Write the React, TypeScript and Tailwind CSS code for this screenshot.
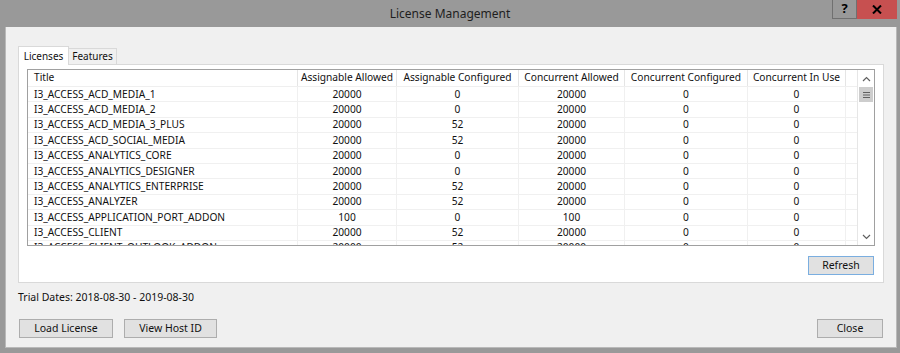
import React from "react";

const rows: string[][] = [
  ["I3_ACCESS_ACD_MEDIA_1", "20000", "0", "20000", "0", "0"],
  ["I3_ACCESS_ACD_MEDIA_2", "20000", "0", "20000", "0", "0"],
  ["I3_ACCESS_ACD_MEDIA_3_PLUS", "20000", "52", "20000", "0", "0"],
  ["I3_ACCESS_ACD_SOCIAL_MEDIA", "20000", "52", "20000", "0", "0"],
  ["I3_ACCESS_ANALYTICS_CORE", "20000", "0", "20000", "0", "0"],
  ["I3_ACCESS_ANALYTICS_DESIGNER", "20000", "0", "20000", "0", "0"],
  ["I3_ACCESS_ANALYTICS_ENTERPRISE", "20000", "52", "20000", "0", "0"],
  ["I3_ACCESS_ANALYZER", "20000", "52", "20000", "0", "0"],
  ["I3_ACCESS_APPLICATION_PORT_ADDON", "100", "0", "100", "0", "0"],
  ["I3_ACCESS_CLIENT", "20000", "52", "20000", "0", "0"],
  ["I3_ACCESS_CLIENT_OUTLOOK_ADDON", "20000", "52", "20000", "0", "0"],
];

const headers = [
  "Title",
  "Assignable Allowed",
  "Assignable Configured",
  "Concurrent Allowed",
  "Concurrent Configured",
  "Concurrent In Use",
];

const widths = ["w-[270px]", "w-[99px]", "w-[122px]", "w-[106px]", "w-[123px]", "w-[98px]"];

const font = { fontFamily: '"Noto Sans", "Open Sans", sans-serif' };

function Btn({ label, w, focused }: { label: string; w: string; focused?: boolean }) {
  return (
    <div
      className={`${w} h-[19px] flex items-center justify-center text-[10.5px] whitespace-nowrap text-[#111] bg-[#e1e1e1] border ${
        focused ? "border-[#7aaee0]" : "border-[#adadad]"
      }`}
    >
      {label}
    </div>
  );
}

export default function App() {
  return (
    <div className="w-[900px] h-[353px] bg-[#999999] flex flex-col overflow-hidden" style={font}>
      {/* title bar */}
      <div className="relative h-[27px] flex items-center justify-center shrink-0">
        <span className="text-[12px] text-[#1e1e1e]">License Management</span>
        <div className="absolute top-0 right-[3px] flex h-[19px]">
          <div className="w-[25px] h-full flex items-center justify-center bg-[#999999] border border-[#707070] border-t-0 text-[13px] font-bold text-black">
            ?
          </div>
          <div className="w-[40px] h-full flex items-center justify-center bg-[#c75050] text-black">
            <svg width="10" height="9" viewBox="0 0 10 9">
              <path d="M1 0.5 L9 8.5 M9 0.5 L1 8.5" stroke="#000" strokeWidth="2" />
            </svg>
          </div>
        </div>
      </div>
      {/* body */}
      <div className="ml-[5px] mr-[3px] h-[321px] bg-[#f0f0f0] border border-[#b9b9b9] border-t-0 flex flex-col px-[12px] pt-[19px]">
        {/* tabs */}
        <div className="flex items-end h-[18px] pl-0 relative z-10">
          <div className="w-[51px] h-[19px] -mb-px bg-white border border-[#d9d9d9] border-b-0 flex items-center justify-center text-[10px] whitespace-nowrap text-[#111]">
            Licenses
          </div>
          <div className="w-[48px] h-[16px] bg-[#f0f0f0] border border-[#d9d9d9] border-l-0 border-b-0 flex items-center justify-center text-[10px] whitespace-nowrap text-[#111]">
            Features
          </div>
        </div>
        {/* panel */}
        <div className="h-[219px] bg-white border border-[#d9d9d9] flex flex-col pl-[8px] pr-[8px] pt-[4px]">
          <div className="h-[177px] border border-[#a0a0a0] flex overflow-hidden">
            <div className="flex flex-col w-[829px] overflow-hidden text-[10.2px] text-[#111]">
              <div className="flex h-[17px] shrink-0 border-b border-[#efefef]">
                {headers.map((h, i) => (
                  <div
                    key={h}
                    className={`${widths[i]} shrink-0 h-full flex items-center whitespace-nowrap border-r border-[#e5e5e5] ${
                      i === 0 ? "pl-[6px]" : "justify-center"
                    }`}
                  >
                    {h}
                  </div>
                ))}
              </div>
              {rows.map((r, ri) => (
                <div key={ri} className="flex h-[15.4px] shrink-0 border-b border-[#f0f0f0]">
                  {r.map((c, i) => (
                    <div
                      key={i}
                      className={`${widths[i]} shrink-0 h-full flex items-center whitespace-nowrap border-r border-[#f0f0f0] ${
                        i === 0 ? "pl-[6px]" : "justify-center"
                      }`}
                    >
                      {c}
                    </div>
                  ))}
                </div>
              ))}
            </div>
            {/* scrollbar */}
            <div className="w-[17px] h-full bg-white border-l border-[#e6e6e6] flex flex-col">
              <div className="h-[17px] flex items-center justify-center">
                <svg width="9" height="6" viewBox="0 0 9 6">
                  <path d="M1 5 L4.5 1.5 L8 5" stroke="#606060" strokeWidth="1.2" fill="none" />
                </svg>
              </div>
              <div className="mx-[1px] h-[15px] bg-[#cdcdcd] flex items-center justify-center">
                <svg width="7" height="6" viewBox="0 0 7 6">
                  <path d="M0 0.5 H7 M0 3 H7 M0 5.5 H7" stroke="#606060" strokeWidth="1" />
                </svg>
              </div>
              <div className="flex-1" />
              <div className="h-[17px] flex items-center justify-center">
                <svg width="9" height="6" viewBox="0 0 9 6">
                  <path d="M1 1 L4.5 4.5 L8 1" stroke="#606060" strokeWidth="1.2" fill="none" />
                </svg>
              </div>
            </div>
          </div>
          <div className="flex justify-end mt-[10px] pr-[1px]">
            <Btn label="Refresh" w="w-[66px]" focused />
          </div>
        </div>
        <div className="h-[29px] flex items-center text-[10.5px] whitespace-nowrap text-[#111]">
          Trial Dates: 2018-08-30 - 2019-08-30
        </div>
        <div className="flex items-center mt-[7px]">
          <div className="ml-[1px]">
            <Btn label="Load License" w="w-[94px]" />
          </div>
          <div className="ml-[11px]">
            <Btn label="View Host ID" w="w-[93px]" />
          </div>
          <div className="flex-1" />
          <div className="mr-[1px]">
            <Btn label="Close" w="w-[66px]" />
          </div>
        </div>
      </div>
    </div>
  );
}
